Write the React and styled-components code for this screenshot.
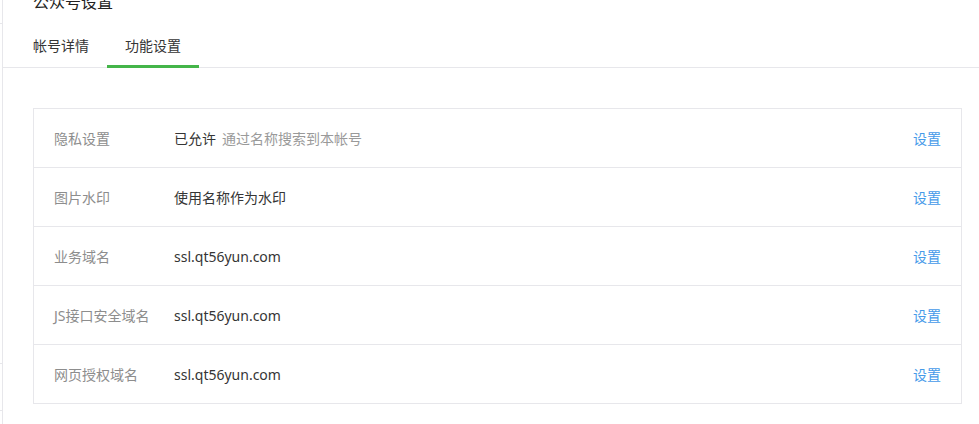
import React from "react";
import styled, { createGlobalStyle } from "styled-components";

const GlobalStyle = createGlobalStyle`
  body {
    margin: 0;
    background: #fff;
    font-family: "Noto Sans", "Noto Sans CJK SC", sans-serif;
    color: #353535;
  }
`;

const Page = styled.div`
  display: flex;
  height: 424px;
  overflow: hidden;
`;

const Sidebar = styled.div`
  width: 2px;
  border-right: 1px solid #e7e7eb;
  flex-shrink: 0;
  div.item {
    border-bottom: 1px solid #e7e7eb;
  }
`;

const Main = styled.div`
  flex: 1;
  min-width: 0;
`;

const Title = styled.div`
  margin-top: -10px;
  padding-left: 30px;
  font-size: 16px;
  line-height: 24px;
  color: #222;
`;

const TabBar = styled.div`
  display: flex;
  padding: 13px 0 0 12px;
  border-bottom: 1px solid #e7e7eb;
`;

const Tab = styled.div`
  padding: 0 18px;
  font-size: 14px;
  line-height: 38px;
  border-bottom: 3px solid ${(p) => (p.$active ? "#44b549" : "transparent")};
  margin-bottom: -1px;
  cursor: pointer;
`;

const Table = styled.div`
  margin: 40px 17px 0 30px;
  border: 1px solid #e7e7eb;
`;

const Row = styled.div`
  display: flex;
  align-items: center;
  height: 58px;
  padding: 0 20px;
  font-size: 14px;
  & + & {
    border-top: 1px solid #e7e7eb;
  }
`;

const Label = styled.div`
  width: 120px;
  flex-shrink: 0;
  color: #8d8d8d;
`;

const Value = styled.div`
  flex: 1;
  color: #353535;
  span {
    margin-left: 6px;
    color: #9a9a9a;
  }
`;

const Link = styled.a`
  color: #459ae9;
  text-decoration: none;
  cursor: pointer;
`;

const rows = [
  { label: "隐私设置", value: "已允许", hint: "通过名称搜索到本帐号" },
  { label: "图片水印", value: "使用名称作为水印" },
  { label: "业务域名", value: "ssl.qt56yun.com" },
  { label: "JS接口安全域名", value: "ssl.qt56yun.com" },
  { label: "网页授权域名", value: "ssl.qt56yun.com" },
];

const App = () => {
  return (
    <>
      <GlobalStyle />
      <Page>
        <Sidebar>
          <div className="item" style={{ height: 23 }} />
          <div className="item" style={{ height: 339 }} />
          <div className="item" style={{ height: 46 }} />
        </Sidebar>
        <Main>
          <Title>公众号设置</Title>
          <TabBar>
            <Tab>帐号详情</Tab>
            <Tab $active>功能设置</Tab>
          </TabBar>
          <Table>
            {rows.map((r) => (
              <Row key={r.label}>
                <Label>{r.label}</Label>
                <Value>
                  {r.value}
                  {r.hint && <span>{r.hint}</span>}
                </Value>
                <Link>设置</Link>
              </Row>
            ))}
          </Table>
        </Main>
      </Page>
    </>
  );
};

export default App;
